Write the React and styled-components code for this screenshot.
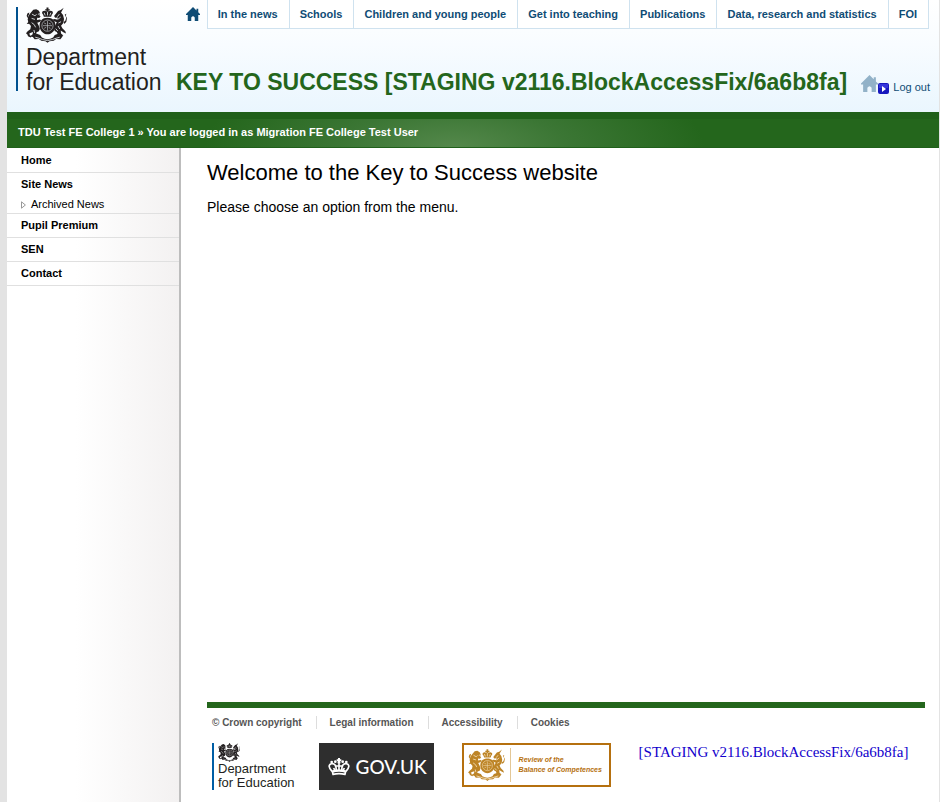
import React from "react";
import styled, { createGlobalStyle, css } from "styled-components";

const green = "#24661c";
const navy = "#0f4c75";

const GlobalStyle = createGlobalStyle`
  *, *::before, *::after { box-sizing: border-box; }
  body {
    margin: 0;
    background: #e3e3e3;
    color: #000;
    font-family: "Liberation Sans", Arial, sans-serif;
    font-size: 14px;
  }
  a { color: inherit; text-decoration: none; }
  ul, h1, h2, p { margin: 0; padding: 0; }
  ul { list-style: none; }
  svg { display: block; flex: none; }
`;

const Page = styled.div`
  display: flex;
  flex-direction: column;
  min-height: 100vh;
  margin: 0 1px 0 7px;
  background: #fff;
`;

const Header = styled.header`
  display: flex;
  min-height: 112px;
  background: linear-gradient(#fff, #f8fcff 40%, #eaf6fe);
`;

const HeaderMain = styled.div`
  display: flex;
  flex: 1;
  flex-direction: column;
  min-width: 0;
`;

const TopNav = styled.nav`
  display: flex;
  justify-content: flex-end;
  padding-right: 10px;
`;

const HomeLink = styled.a`
  display: flex;
  padding: 7px 7px 0 0;
`;

const NavList = styled.ul`
  display: flex;
  border: solid #cfe2ef;
  border-width: 0 1px 1px 0;
  background: #fff;
`;

const NavItem = styled.li`
  padding: 0 11px 0 10px;
  border-left: 1px solid #cfe2ef;
  color: ${navy};
  font-size: 11px;
  font-weight: bold;
  line-height: 28px;
  white-space: nowrap;
`;

const TitleRow = styled.div`
  display: flex;
  align-items: flex-end;
  justify-content: space-between;
  padding: 38px 9px 0 0;
`;

const SiteTitle = styled.h1`
  color: ${green};
  font-size: 23px;
  line-height: 30px;
  white-space: nowrap;
`;

const LogOut = styled.a`
  display: flex;
  align-items: flex-end;
  color: ${navy};
  font-size: 11px;
  line-height: 20px;
  white-space: nowrap;
  gap: 4px;
`;

const LogOutIcons = styled.span`
  display: flex;
  align-items: flex-end;
  padding-bottom: 3px;
`;

const Brand = styled.a`
  display: flex;
  flex-direction: column;
  flex: none;
  color: #231f20;
  white-space: nowrap;
  ${({ $small }) =>
    $small
      ? css`
          padding-left: 4px;
          border-left: 2px solid #005ea5;
          font-size: 13px;
          line-height: 14px;
        `
      : css`
          height: 84px;
          width: 160px;
          margin: 7px 0 0 9px;
          padding-left: 8px;
          border-left: 2px solid #00518f;
          font-size: 23px;
          line-height: 25px;
          gap: 2px;
        `}
`;

const UserBar = styled.div`
  border: solid #20601a;
  border-width: 7px 0 1px;
  padding: 0 11px 2px;
  background: radial-gradient(ellipse 250px 84px at 48% 100%, #54884b, #3b7634 45%, ${green}) ${green};
  color: #fff;
  font-size: 11px;
  font-weight: bold;
  line-height: 26px;
`;

const Columns = styled.div`
  display: flex;
  flex: 1;
`;

const Sidebar = styled.nav`
  flex: none;
  width: 174px;
  padding-top: 1px;
  border-right: 2px solid #bdbdbd;
  background: linear-gradient(to right, #fff 40%, #f3f1f1);
  font-size: 11px;
`;

const MenuItem = styled.li`
  padding-left: 14px;
  border-bottom: 1px solid #e0e0e0;
  line-height: 23px;
`;

const MenuLink = styled.a`
  font-weight: bold;
`;

const SubLink = styled.a`
  display: flex;
  align-items: center;
  gap: 5px;
  line-height: 17px;
`;

const Content = styled.div`
  display: flex;
  flex: 1;
  flex-direction: column;
  min-width: 0;
  padding: 0 14px 0 26px;
`;

const Main = styled.main`
  flex: 1;
  padding-top: 12px;
`;

const Heading = styled.h2`
  font-size: 22px;
  font-weight: normal;
  line-height: 26px;
`;

const Intro = styled.p`
  padding-top: 11px;
  line-height: 20px;
`;

const Footer = styled.footer`
  border-top: 6px solid ${green};
  padding: 8px 5px 12px;
`;

const FooterLinks = styled.ul`
  display: flex;
  color: #555;
  font-size: 10px;
  font-weight: bold;
  line-height: 13px;
`;

const FooterItem = styled.li`
  & + & {
    margin-left: 14px;
    padding-left: 13px;
    border-left: 1px solid #ddd;
  }
`;

const Partners = styled.div`
  display: flex;
  align-items: flex-start;
  padding-top: 14px;
`;

const GovUk = styled.a`
  display: flex;
  align-items: center;
  gap: 6px;
  width: 115px;
  height: 47px;
  margin-left: 24px;
  padding-left: 9px;
  background: #2e2e2e;
  color: #fff;
  font-family: Lato, sans-serif;
  font-size: 19px;
  font-weight: 500;
`;

const Review = styled.a`
  display: flex;
  align-items: center;
  width: 149px;
  height: 44px;
  margin-left: 28px;
  padding-left: 4px;
  border: 2px solid #b5700f;
  color: #b5700f;
`;

const ReviewText = styled.span`
  margin-left: 5px;
  padding: 7px 0 7px 8px;
  border-left: 1px solid #e3c796;
  font-size: 7px;
  font-style: italic;
  font-weight: bold;
  line-height: 10px;
  white-space: nowrap;
`;

const BuildLink = styled.a`
  margin-left: 28px;
  color: #1100cc;
  font-family: "Liberation Serif", serif;
  font-size: 15px;
  line-height: 19px;
  white-space: nowrap;
`;

function Crest({ width, color, paper }) {
  return (
    <svg viewBox="10 6 124 108" width={width} height={Math.round((width * 108) / 124)} aria-hidden="true">
      <g fill={color}>
        <path d="M72 7h6v5h4v4h-4v3q7-4 13 1 2 4-3 9l-2 6H64l-2-6q-5-5-3-9 6-5 13-1v-3h-4v-4h4z" />
        <path d="M75 38c16 0 24 10 24 24S88 88 75 88 51 76 51 62s8-24 24-24z" />
        <path d="M32 14l9-2 8 5 4 8-3 5 4 4-4 5-6-1-1 7 9-2 4 3-5 5-7 2 4 8 4 10-3 8-7 3-3 10-9 4-7-2 7-6 1-7-8 3-9 5-4-4 5-6 8-6 2-10-7-8-3-12 3-12 7-9z" />
        <path d="M12 56l6-6-1-9-5-8 2-8 6-3-1 6-3 5 5 6 2 9-5 9z" />
        <path d="M13 84l7 1 2 7 6 1-4 5-8-4z" />
        <path d="M124 8l-8 14 6 8 3 12-2 12-7 8 4 8 9 9 2 7-8-4-8-5 1 9 7 6-7 3-8-3-5-11-6-3-3-8 5-10 4-8-9-4-3-5 6-1 8 2 1-7-8 1-3-5 6-8 6-7 8-3z" />
        <path d="M132 26l-5 3 5 9-3 9-5 4 2 6 6-7 2-12-4-5z" />
        <path d="M29 94q8-1 12-8l12 4 5 8q17 10 34 0l5-8 12-4q4 7 12 8l-7 9-13-1-7 6-13 1-6 5-6-5-13-1-7-6-13 1z" />
      </g>
      <g fill="none" stroke={paper} strokeWidth="3">
        <circle cx="75" cy="62" r="17" strokeWidth="2" />
        <path d="M75 48v29M61 62h28M65 54l6 3m8-2l6 2M65 70l6-3m8 1l5 2" strokeWidth="2" />
        <path d="M65 23l3 8m14 0l3-8M75 20v11" />
        <path d="M28 27l9 5 5-4M27 40l10 3M27 53l8 6 4 8M34 75l2 9M52 25l-6 3" />
        <path d="M111 27l-6 8m10 1l-9 7m10 7l-8 4m-1 9l5 9m-12-1l6 7" />
        <path d="M38 97l11 3 11 4 15 3 15-3 11-4 11-3" />
      </g>
    </svg>
  );
}

function House({ size, color }) {
  return (
    <svg viewBox="0 0 16 16" width={size} height={size} fill={color} aria-hidden="true">
      <path d="M8 0L0 8v1h2v7h4v-4q2-3 4 0v4h4V9h2V8l-2-2V2h-2v2z" />
    </svg>
  );
}

const LogOutHouse = styled.span`
  padding-bottom: 2px;
`;

function PlayBadge() {
  return (
    <svg viewBox="0 0 11 11" width="11" height="11" aria-hidden="true">
      <rect width="11" height="11" rx="2" fill="#1717bd" />
      <path d="M1 1h9v4H1z" fill="#3535db" />
      <path d="M4 3l4 3-4 3z" fill="#fff" />
    </svg>
  );
}

function Arrow() {
  return (
    <svg viewBox="0 0 5 8" width="5" height="8" aria-hidden="true">
      <path d="M.5 .8L4.4 4 .5 7.2z" fill="#fff" stroke="#999" />
    </svg>
  );
}

function Crown() {
  return (
    <svg viewBox="0 0 66 54" width="22" height="18" aria-hidden="true">
      <g fill="none" stroke="#fff" strokeWidth="5">
        <path d="M12 40Q-4 22 10 17q14-3 15 20M54 40q16-18 2-23-14-3-15 20" />
        <path d="M33 14v24M24 24h18M13 40q20-7 40 0l-2 9q-18-4-36 0z" />
        <path d="M17 30l4 8m28-8l-4 8" />
      </g>
      <g fill="#fff">
        <path d="M30 0h6v4h4v6h-4l2 6H28l2-6h-4V4h4z" />
        <circle cx="22" cy="11" r="4" />
        <circle cx="44" cy="11" r="4" />
        <circle cx="11" cy="12" r="4" />
        <circle cx="55" cy="12" r="4" />
        <path d="M14 38q19-6 38 0v6q-19-6-38 0z" />
      </g>
    </svg>
  );
}

const navItems = [
  "In the news",
  "Schools",
  "Children and young people",
  "Get into teaching",
  "Publications",
  "Data, research and statistics",
  "FOI",
];

const menu = [
  { label: "Home" },
  { label: "Site News", child: "Archived News" },
  { label: "Pupil Premium" },
  { label: "SEN" },
  { label: "Contact" },
];

const footerItems = ["© Crown copyright", "Legal information", "Accessibility", "Cookies"];

export default function App() {
  return (
    <>
      <GlobalStyle />
      <Page>
        <Header>
          <Brand href="#">
            <Crest width={41} color="#231f20" paper="#c9cdd0" />
            <span>
              Department
              <br />
              for Education
            </span>
          </Brand>
          <HeaderMain>
            <TopNav>
              <HomeLink href="#" aria-label="Home">
                <House size={14} color={navy} />
              </HomeLink>
              <NavList>
                {navItems.map((label) => (
                  <NavItem key={label}>
                    <a href="#">{label}</a>
                  </NavItem>
                ))}
              </NavList>
            </TopNav>
            <TitleRow>
              <SiteTitle>KEY TO SUCCESS [STAGING v2116.BlockAccessFix/6a6b8fa]</SiteTitle>
              <LogOut href="#">
                <LogOutIcons>
                  <LogOutHouse>
                    <House size={17} color="#92b2c8" />
                  </LogOutHouse>
                  <PlayBadge />
                </LogOutIcons>
                Log out
              </LogOut>
            </TitleRow>
          </HeaderMain>
        </Header>
        <UserBar>TDU Test FE College 1 » You are logged in as Migration FE College Test User</UserBar>
        <Columns>
          <Sidebar>
            <ul>
              {menu.map(({ label, child }) => (
                <MenuItem key={label}>
                  <MenuLink href="#">{label}</MenuLink>
                  {child && (
                    <SubLink href="#">
                      <Arrow />
                      {child}
                    </SubLink>
                  )}
                </MenuItem>
              ))}
            </ul>
          </Sidebar>
          <Content>
            <Main>
              <Heading>Welcome to the Key to Success website</Heading>
              <Intro>Please choose an option from the menu.</Intro>
            </Main>
            <Footer>
              <FooterLinks>
                {footerItems.map((label) => (
                  <FooterItem key={label}>
                    <a href="#">{label}</a>
                  </FooterItem>
                ))}
              </FooterLinks>
              <Partners>
                <Brand href="#" $small>
                  <Crest width={22} color="#231f20" paper="#cccccc" />
                  <span>
                    Department
                    <br />
                    for Education
                  </span>
                </Brand>
                <GovUk href="#">
                  <Crown />
                  GOV.UK
                </GovUk>
                <Review href="#">
                  <Crest width={37} color="#bd8426" paper="#f0dab0" />
                  <ReviewText>
                    Review of the
                    <br />
                    Balance of Competences
                  </ReviewText>
                </Review>
                <BuildLink href="#">[STAGING v2116.BlockAccessFix/6a6b8fa]</BuildLink>
              </Partners>
            </Footer>
          </Content>
        </Columns>
      </Page>
    </>
  );
}
